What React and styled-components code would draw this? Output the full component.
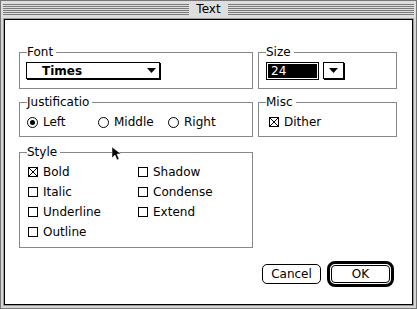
import React from "react";
import styled, { createGlobalStyle } from "styled-components";

const Global = createGlobalStyle`
  html, body { margin: 0; padding: 0; background: #fff; }
  body { font-family: "DejaVu Sans", "Liberation Sans", sans-serif; font-size: 12px; color: #000; }
`;

const Window = styled.div`
  box-sizing: border-box;
  width: 417px;
  height: 309px;
  border: 1px solid #777;
  background: #d6d6d6;
  display: flex;
  flex-direction: column;
  padding-bottom: 2px;
`;

const TitleBar = styled.div`
  flex: none;
  height: 17px;
  display: flex;
  align-items: center;
  padding: 0 2px;
  background: #dedede;
`;

const Stripes = styled.div`
  flex: 1;
  height: 11px;
  background: repeating-linear-gradient(to bottom, #7a7a7a 0 1px, transparent 1px 2px);
`;

const Title = styled.div`
  padding: 0 7px;
  line-height: 17px;
`;

const Frame = styled.div`
  flex: 1;
  margin: 0 2px;
  border: 1px solid #9c9c9c;
  display: flex;
`;

const Content = styled.div`
  flex: 1;
  position: relative;
  border: 1px solid #000;
  background: #fff;
  display: flex;
  flex-direction: column;
  padding: 26px 0 0 14px;
`;

const Grid = styled.div`
  display: grid;
  grid-template-columns: 234px 139px;
  grid-template-rows: 50px 50px auto;
  column-gap: 5px;
  align-items: start;
`;

const Group = styled.fieldset`
  box-sizing: border-box;
  margin: 0;
  padding: 0;
  min-width: 0;
  border: 1px solid #888;
  height: ${(p) => p.$h}px;
`;

const Legend = styled.legend`
  margin-left: 7px;
  padding: 0 3px 0 0;
  font-size: 12px;
  line-height: 12px;
`;

const Body = styled.div`
  padding: ${(p) => p.$pad};
`;

const PopUp = styled.div`
  box-sizing: border-box;
  width: 134px;
  height: 17px;
  border: 1px solid #000;
  box-shadow: 1px 1px 0 #000;
  display: flex;
  align-items: center;
  justify-content: space-between;
  padding: 0 3px 0 15px;
  font-weight: bold;
  background: #fff;
`;

const SizeRow = styled.div`
  display: flex;
  align-items: flex-start;
  gap: 4px;
`;

const Field = styled.div`
  box-sizing: border-box;
  width: 53px;
  height: 18px;
  border: 1px solid #000;
  padding: 1px;
`;

const Selection = styled.div`
  height: 100%;
  background: #000;
  color: #fff;
  padding-left: 3px;
  line-height: 14px;
`;

const ArrowButton = styled.div`
  box-sizing: border-box;
  width: 21px;
  height: 17px;
  border: 1px solid #000;
  box-shadow: 1px 1px 0 #000;
  display: flex;
  align-items: center;
  justify-content: center;
  background: #fff;
`;

const RadioRow = styled.div`
  display: grid;
  grid-template-columns: 71px 70px auto;
`;

const CheckGrid = styled.div`
  display: grid;
  grid-template-columns: 110px auto;
  grid-template-rows: repeat(4, 20px);
  grid-auto-flow: column;
`;

const Item = styled.div`
  display: flex;
  align-items: center;
  gap: 5px;
  height: 20px;
  white-space: nowrap;
`;

const Circle = styled.span`
  box-sizing: border-box;
  width: 11px;
  height: 11px;
  border: 1px solid #000;
  border-radius: 50%;
  display: inline-flex;
  align-items: center;
  justify-content: center;
  flex: none;
`;

const Dot = styled.span`
  width: 5px;
  height: 5px;
  border-radius: 50%;
  background: #000;
`;

const Box = styled.span`
  box-sizing: border-box;
  width: 10px;
  height: 10px;
  border: 1px solid #000;
  display: inline-block;
  position: relative;
  flex: none;
`;

const Cross = styled.svg`
  position: absolute;
  left: -1px;
  top: -1px;
`;

const ButtonRow = styled.div`
  display: flex;
  justify-content: flex-end;
  align-items: center;
  gap: 6px;
  margin-top: 13px;
  padding-right: 18px;
`;

const Button = styled.div`
  box-sizing: border-box;
  width: 59px;
  height: 20px;
  border: 1px solid #000;
  border-radius: 5px;
  display: flex;
  align-items: center;
  justify-content: center;
  background: #fff;
`;

const DefaultRing = styled.div`
  box-sizing: border-box;
  width: 67px;
  height: 26px;
  border: 3px solid #000;
  border-radius: 8px;
  padding: 1px;
  display: flex;
`;

const DefaultInner = styled(Button)`
  flex: 1;
  width: auto;
  height: auto;
  border-radius: 4px;
`;

const Cursor = styled.svg`
  position: absolute;
  left: 107px;
  top: 127px;
`;

const Triangle = () => (
  <svg width="9" height="5" viewBox="0 0 9 5">
    <polygon points="0,0 9,0 4.5,5" fill="#000" />
  </svg>
);

const Radio = ({ checked, children }) => (
  <Item>
    <Circle>{checked && <Dot />}</Circle>
    {children}
  </Item>
);

const Check = ({ checked, children }) => (
  <Item>
    <Box>
      {checked && (
        <Cross width="10" height="10" viewBox="0 0 10 10" shapeRendering="crispEdges">
          <line x1="0.5" y1="0.5" x2="9.5" y2="9.5" stroke="#000" strokeWidth="1" />
          <line x1="9.5" y1="0.5" x2="0.5" y2="9.5" stroke="#000" strokeWidth="1" />
        </Cross>
      )}
    </Box>
    {children}
  </Item>
);

export default function App() {
  return (
    <>
      <Global />
      <Window>
        <TitleBar>
          <Stripes />
          <Title>Text</Title>
          <Stripes />
        </TitleBar>
        <Frame>
          <Content>
            <Grid>
              <Group $h={43}>
                <Legend>Font</Legend>
                <Body $pad="4px 0 0 6px">
                  <PopUp>
                    <span>Times</span>
                    <Triangle />
                  </PopUp>
                </Body>
              </Group>
              <Group $h={43}>
                <Legend>Size</Legend>
                <Body $pad="4px 0 0 7px">
                  <SizeRow>
                    <Field>
                      <Selection>24</Selection>
                    </Field>
                    <ArrowButton>
                      <Triangle />
                    </ArrowButton>
                  </SizeRow>
                </Body>
              </Group>
              <Group $h={41}>
                <Legend>Justificatio</Legend>
                <Body $pad="4px 0 0 7px">
                  <RadioRow>
                    <Radio checked>Left</Radio>
                    <Radio>Middle</Radio>
                    <Radio>Right</Radio>
                  </RadioRow>
                </Body>
              </Group>
              <Group $h={41}>
                <Legend>Misc</Legend>
                <Body $pad="4px 0 0 10px">
                  <Check checked>Dither</Check>
                </Body>
              </Group>
              <Group $h={102}>
                <Legend>Style</Legend>
                <Body $pad="4px 0 0 8px">
                  <CheckGrid>
                    <Check checked>Bold</Check>
                    <Check>Italic</Check>
                    <Check>Underline</Check>
                    <Check>Outline</Check>
                    <Check>Shadow</Check>
                    <Check>Condense</Check>
                    <Check>Extend</Check>
                  </CheckGrid>
                </Body>
              </Group>
            </Grid>
            <ButtonRow>
              <Button>Cancel</Button>
              <DefaultRing>
                <DefaultInner>OK</DefaultInner>
              </DefaultRing>
            </ButtonRow>
            <Cursor width="10" height="16" viewBox="0 0 10 16">
              <polygon points="0,0 0,11 3,8 5,13 7,12 5,7 9,7" fill="#000" stroke="#fff" strokeWidth="0.5" />
            </Cursor>
          </Content>
        </Frame>
      </Window>
    </>
  );
}
